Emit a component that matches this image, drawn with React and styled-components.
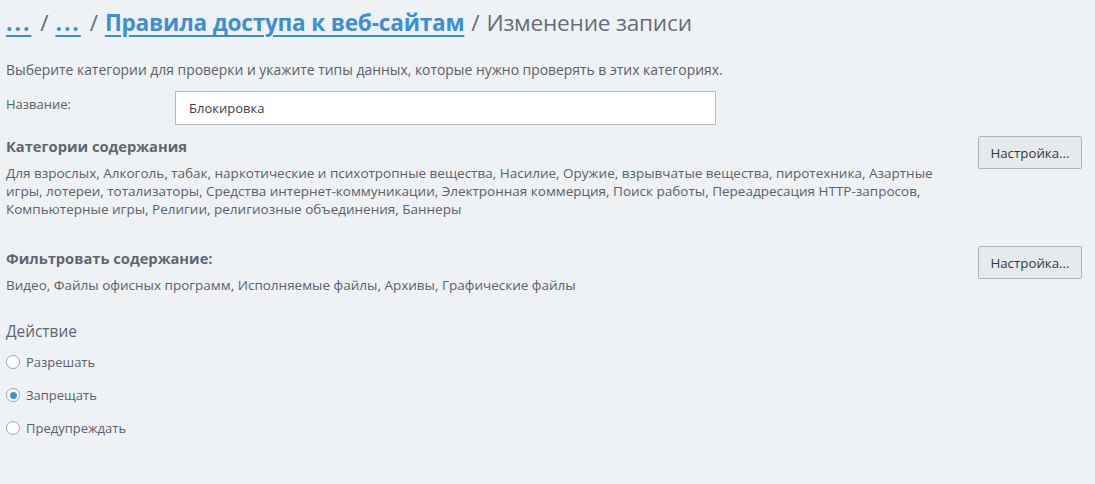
import styled, { createGlobalStyle } from "styled-components";

const GlobalStyle = createGlobalStyle`
	html, body {
		margin: 0;
		padding: 0;
		background: #eef2f5;
	}
	body {
		font-family: "Open Sans", "Noto Sans", sans-serif;
		color: #5c6168;
	}
`;

const Page = styled.div`
	width: 1095px;
	height: 484px;
	box-sizing: border-box;
	padding: 6px 13px 0 6px;
	background: #eef2f5;
	font-size: 13px;
`;

const Breadcrumbs = styled.h1`
	margin: 0;
	font-size: 22.6px;
	font-weight: 400;
	line-height: 34px;
	color: #676e75;
	letter-spacing: -0.2px;
`;

const Crumb = styled.a`
	color: #3d8ed5;
	font-weight: 700;
	letter-spacing: ${({ $dots }) => ($dots ? "2px" : "-0.2px")};
	text-decoration: underline;
	text-underline-offset: 4px;
	text-decoration-thickness: 2px;
`;

const Sep = styled.span`
	margin: 0 7px 0 ${({ $wide }) => ($wide ? 7 : 9)}px;
`;

const Hint = styled.p`
	margin: 21px 0 0;
	font-size: 13.9px;
	line-height: 18px;
`;

const FieldRow = styled.div`
	display: flex;
	align-items: center;
	margin-top: 12px;
`;

const FieldLabel = styled.label`
	width: 169px;
	flex-shrink: 0;
	margin-top: -8px;
`;

const TextInput = styled.input`
	width: 541px;
	height: 34px;
	box-sizing: border-box;
	padding: 0 13px;
	border: 1px solid #b4bac0;
	background: #fff;
	font: inherit;
	font-size: 13px;
	color: #3d4247;
	outline: none;
`;

const Section = styled.div`
	display: flex;
	align-items: flex-start;
	gap: 40px;
	margin-top: ${({ $top }) => $top}px;
`;

const SectionBody = styled.div`
	flex: 1;
`;

const SectionTitle = styled.h3`
	margin: 0;
	font-size: 14.7px;
	font-weight: 700;
	line-height: 20px;
	color: #5f666e;
`;

const SectionText = styled.p`
	margin: 8px 0 0;
	font-size: 13.5px;
	line-height: 18px;
`;

const Button = styled.button`
	flex-shrink: 0;
	margin-top: ${({ $top }) => $top || 0}px;
	width: 104px;
	height: 33px;
	padding: 0;
	border: 1px solid #aeb4ba;
	border-radius: 2px;
	background: #e6eaed;
	font: inherit;
	font-size: 13.3px;
	color: #33383d;
	cursor: pointer;
`;

const ActionTitle = styled.h2`
	margin: 27px 0 0;
	font-size: 15.4px;
	font-weight: 400;
	line-height: 22px;
	color: #5f666e;
`;

const RadioList = styled.div`
	display: flex;
	flex-direction: column;
	gap: 15px;
	margin-top: 10px;
`;

const RadioRow = styled.label`
	display: flex;
	align-items: center;
	gap: 6px;
	line-height: 18px;
`;

const RadioDot = styled.span`
	width: 14px;
	height: 14px;
	box-sizing: border-box;
	border-radius: 50%;
	border: 1px solid #9fa6ad;
	background: #fff;
	display: flex;
	align-items: center;
	justify-content: center;

	&::after {
		content: "";
		width: 7px;
		height: 7px;
		border-radius: 50%;
		background: ${({ $checked }) => ($checked ? "#3d8ed5" : "transparent")};
	}
`;

const actions = [
	{ id: "allow", label: "Разрешать", checked: false },
	{ id: "deny", label: "Запрещать", checked: true },
	{ id: "warn", label: "Предупреждать", checked: false },
];

export default function App() {
	return (
		<>
			<GlobalStyle />
			<Page>
				<Breadcrumbs>
					<Crumb href="#" $dots>...</Crumb>
					<Sep>/</Sep>
					<Crumb href="#" $dots>...</Crumb>
					<Sep>/</Sep>
					<Crumb href="#">Правила доступа к веб-сайтам</Crumb>
					<Sep $wide>/</Sep>
					Изменение записи
				</Breadcrumbs>
				<Hint>
					Выберите категории для проверки и укажите типы данных, которые нужно
					проверять в этих категориях.
				</Hint>
				<FieldRow>
					<FieldLabel>Название:</FieldLabel>
					<TextInput defaultValue="Блокировка" />
				</FieldRow>
				<Section $top={11}>
					<SectionBody>
						<SectionTitle>Категории содержания</SectionTitle>
						<SectionText>
							Для взрослых, Алкоголь, табак, наркотические и психотропные
							вещества, Насилие, Оружие, взрывчатые вещества, пиротехника,
							Азартные игры, лотереи, тотализаторы, Средства
							интернет-коммуникации, Электронная коммерция, Поиск работы,
							Переадресация HTTP-запросов, Компьютерные игры, Религии,
							религиозные объединения, Баннеры
						</SectionText>
					</SectionBody>
					<Button>Настройка...</Button>
				</Section>
				<Section $top={30}>
					<SectionBody>
						<SectionTitle>Фильтровать содержание:</SectionTitle>
						<SectionText>
							Видео, Файлы офисных программ, Исполняемые файлы, Архивы,
							Графические файлы
						</SectionText>
					</SectionBody>
					<Button $top={-2}>Настройка...</Button>
				</Section>
				<ActionTitle>Действие</ActionTitle>
				<RadioList>
					{actions.map((item) => (
						<RadioRow key={item.id}>
							<RadioDot $checked={item.checked} />
							{item.label}
						</RadioRow>
					))}
				</RadioList>
			</Page>
		</>
	);
}
